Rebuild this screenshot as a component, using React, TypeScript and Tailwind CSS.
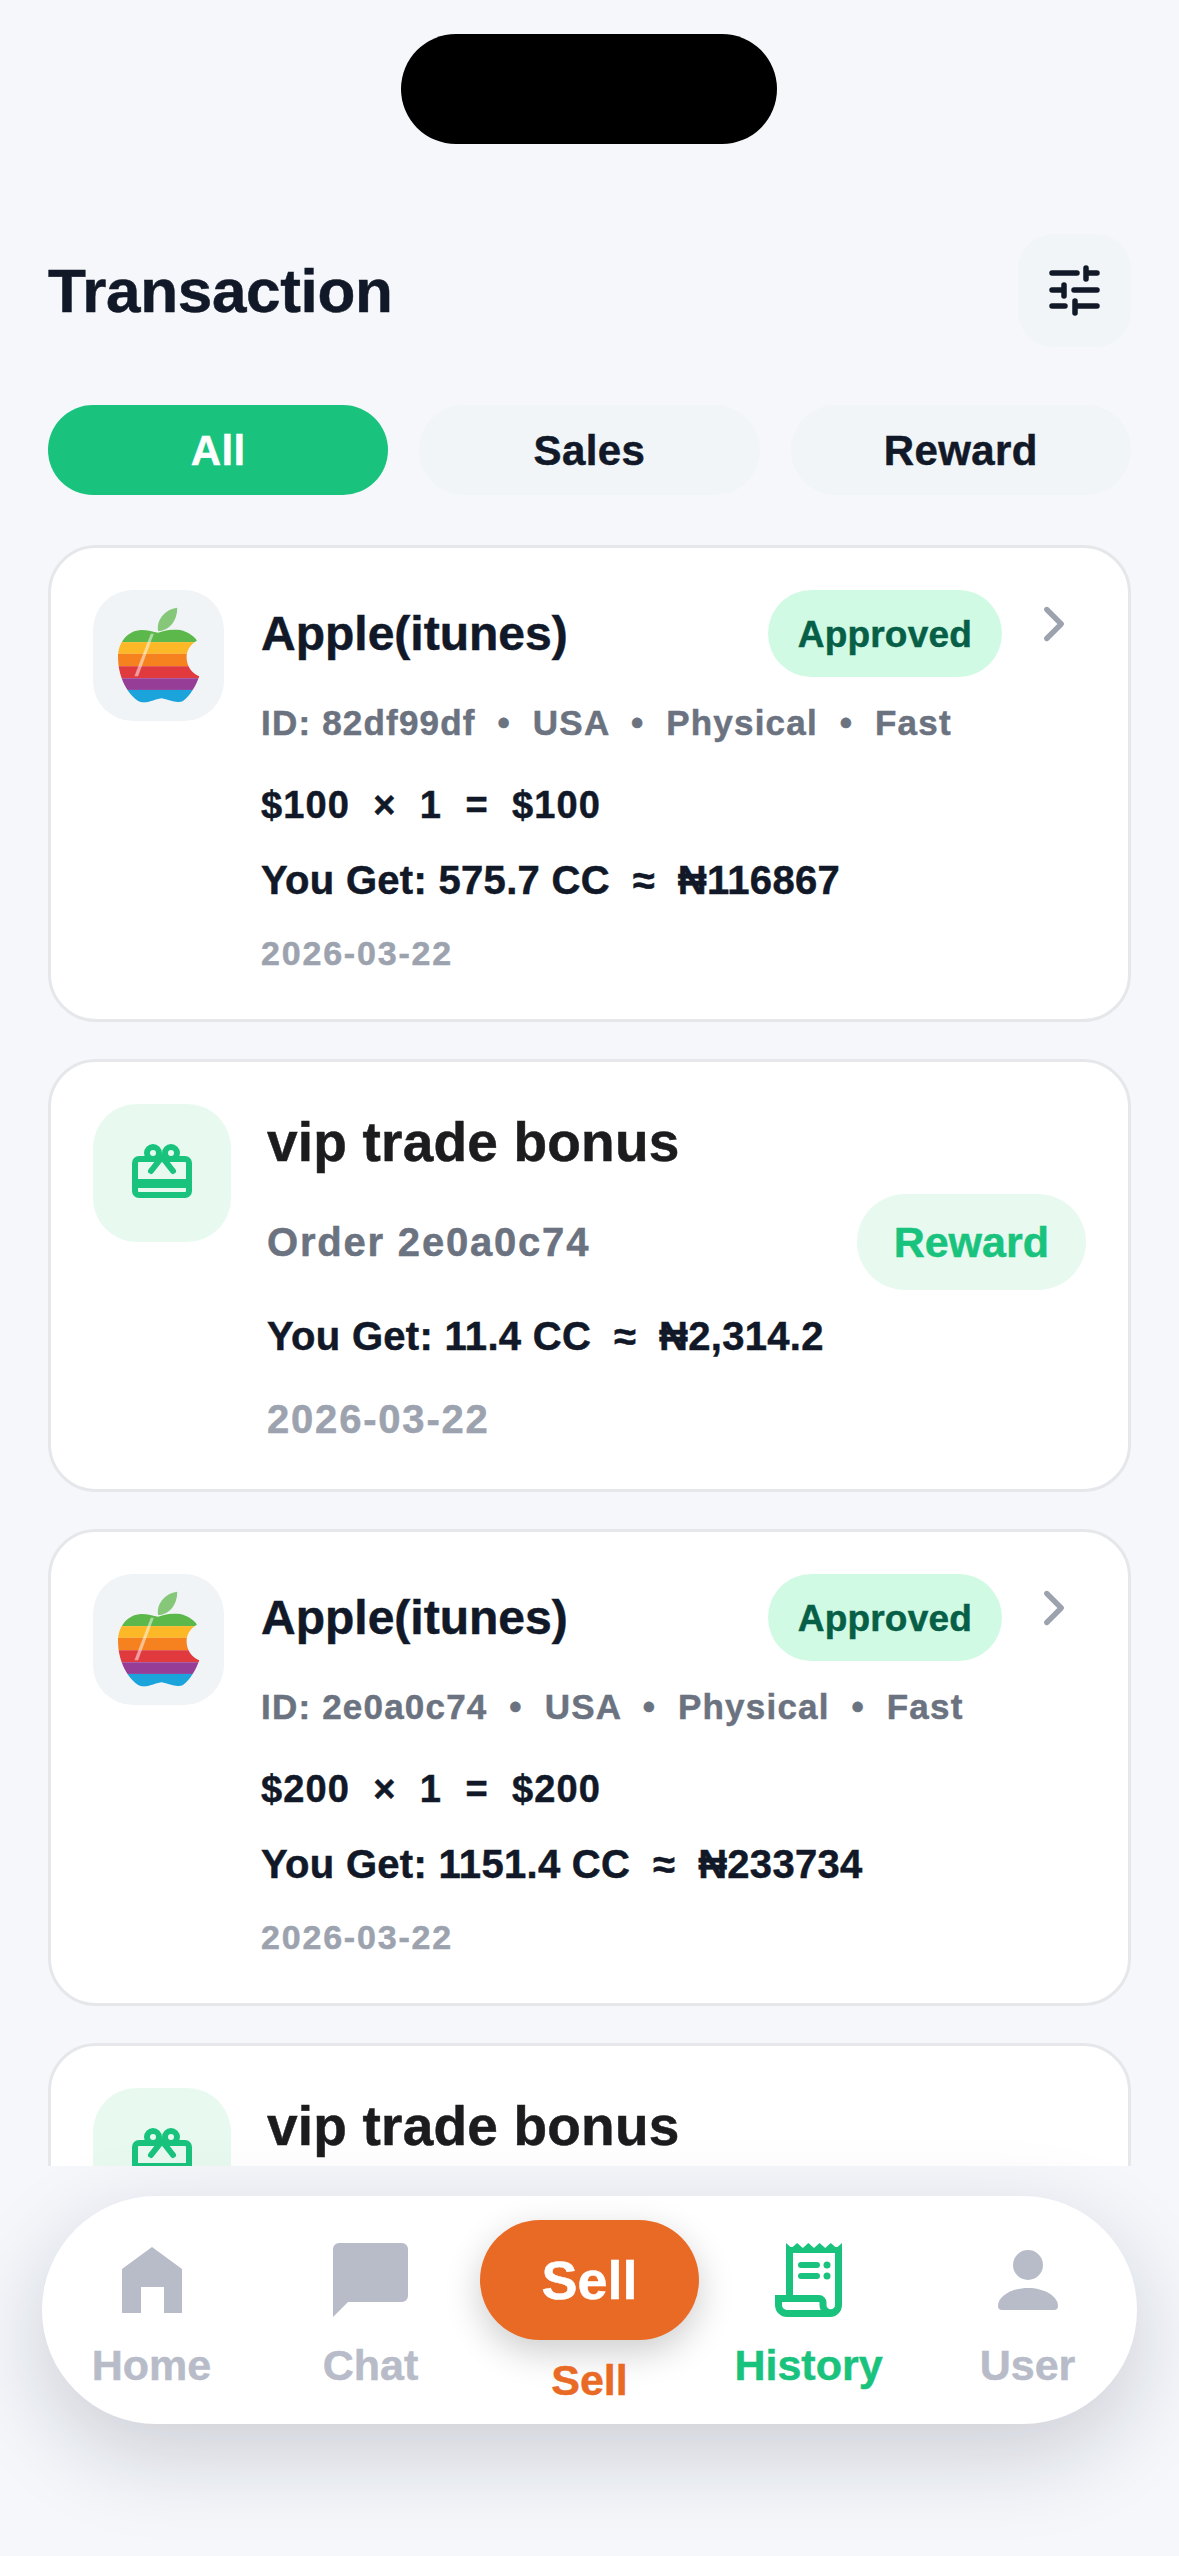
import { ChevronRight } from "lucide-react"

const font = "font-['Liberation_Sans','Arial',sans-serif]"

function TuneIcon() {
  return (
    <svg viewBox="36 34 56 56" className="w-[56px] h-[56px]" fill="none" stroke="#111827" strokeWidth="5.5" strokeLinecap="round">
      <path d="M41 44H66M75 39V50M75 44H86M41 61H53M53 56V67M63 61H86M41 77H54M64 72V84M64 77H86" />
    </svg>
  )
}

function AppleLogo({ uid }: { uid: string }) {
  return (
    <svg viewBox="85 55 245 290" className="w-[82px] h-[97px]">
      <defs>
        <clipPath id={uid}>
          <path d="M205 132C225 125 250 120 270 124C290 128 310 140 321 155C300 168 290 185 290 205C290 232 305 252 328 262C318 290 300 322 280 335C260 346 240 332 215 328C190 332 170 346 150 338C115 320 85 265 85 205C85 160 115 125 155 124C175 124 190 130 205 132Z" />
        </clipPath>
      </defs>
      <path d="M205 127C198 95 225 62 262 57C262 95 240 125 205 127Z" fill="#86c77a" />
      <g clipPath={`url(#${uid})`}>
        <rect x="80" y="115" width="255" height="45" fill="#5cb84a" />
        <rect x="80" y="160" width="255" height="35" fill="#fdb827" />
        <rect x="80" y="195" width="255" height="37" fill="#f5821f" />
        <rect x="80" y="232" width="255" height="36" fill="#e03a3e" />
        <rect x="80" y="268" width="255" height="35" fill="#963d97" />
        <rect x="80" y="303" width="255" height="45" fill="#1ba3dc" />
        <path d="M183 135L192 135L145 262L134 262Z" fill="#fff" opacity="0.5" />
      </g>
    </svg>
  )
}

function GiftIcon() {
  return (
    <svg viewBox="12 13 60 54" className="w-[60px] h-[54px]" fill="none" stroke="#19c37d" strokeWidth="6" strokeLinecap="round" strokeLinejoin="round">
      <rect x="15" y="28" width="54" height="36" rx="4" />
      <path d="M15 52.5H69" strokeWidth="9" strokeLinecap="butt" />
      <path d="M31 40L42 26L53 40" />
      <circle cx="33" cy="22" r="6" />
      <circle cx="51" cy="22" r="6" />
    </svg>
  )
}

function SaleCard({ id, rate, total, cc, naira }: { id: string; rate: string; total: string; cc: string; naira: string }) {
  return (
    <div className="flex shrink-0 h-[477px] pl-[42px] pr-[42px] pt-[42px] bg-white border-[3px] border-[#e5e7eb] rounded-[48px]">
      <div className="flex items-center justify-center w-[131px] h-[131px] shrink-0 rounded-[40px] bg-[#f0f4f7]">
        <AppleLogo uid={`apple-${id}`} />
      </div>
      <div className="flex-1 ml-[37px]">
        <div className="flex items-center justify-between h-[87px]">
          <span className="text-[48px] font-bold text-[#111827]">Apple(itunes)</span>
          <div className="flex items-start">
            <span className="flex items-center h-[87px] px-[30px] pt-[2px] rounded-full bg-[#d1fae5] text-[#065f46] text-[37px] font-bold tracking-[0.2px]">Approved</span>
            <ChevronRight className="w-[58px] h-[58px] ml-[23px] mr-[3px] mt-[5px] text-[#9ca3af]" strokeWidth={2.2} />
          </div>
        </div>
        <p className="mt-[24px] text-[#6b7280] text-[35px] font-bold leading-[44px] tracking-[1.2px] whitespace-pre">{`ID: ${id}  •  USA  •  Physical  •  Fast`}</p>
        <p className="mt-[35px] text-[#111827] text-[38px] font-bold leading-[50px] tracking-[1.1px] whitespace-pre">{`$${rate}  ×  1  =  $${total}`}</p>
        <p className="mt-[25px] text-[#111827] text-[40px] font-bold leading-[50px] tracking-[0.3px] whitespace-pre">{`You Get: ${cc} CC  ≈  ₦${naira}`}</p>
        <p className="mt-[26px] text-[#9ca3af] text-[34px] font-bold leading-[44px] tracking-[1.8px]">2026-03-22</p>
      </div>
    </div>
  )
}

// the last card is cut off by the nav area, only its title shows
function BonusCard({ order, cc, naira }: { order?: string; cc?: string; naira?: string }) {
  return (
    <div className="flex shrink-0 h-[433px] pl-[42px] pr-[42px] pt-[42px] bg-white border-[3px] border-[#e5e7eb] rounded-[48px]">
      <div className="flex items-center justify-center w-[138px] h-[138px] shrink-0 pb-[4px] rounded-[44px] bg-[#e8faf0]">
        <GiftIcon />
      </div>
      <div className="flex-1 ml-[36px]">
        <p className="text-[55px] font-bold tracking-[0.2px] text-[#1c1c1e] leading-[76px]">vip trade bonus</p>
        {order && (
          <>
            <div className="flex items-center justify-between mt-[14px]">
              <span className="text-[#6b7280] text-[40px] font-bold tracking-[1.8px]">Order {order}</span>
              <span className="flex items-center h-[96px] px-[37px] rounded-full bg-[#e8faf0] text-[#19c37d] text-[43px] font-bold">Reward</span>
            </div>
            <p className="mt-[21px] text-[#111827] text-[40px] font-bold leading-[50px] tracking-[0.3px] whitespace-pre">{`You Get: ${cc} CC  ≈  ₦${naira}`}</p>
            <p className="mt-[33px] text-[#9ca3af] text-[40px] font-bold leading-[50px] tracking-[1.8px]">2026-03-22</p>
          </>
        )}
      </div>
    </div>
  )
}

function NavItem({ label, icon, color }: { label: string; icon: React.ReactNode; color: string }) {
  return (
    <div className="flex flex-col items-center w-[219px]">
      <div className="flex items-center justify-center h-[84px]">{icon}</div>
      <span className={`mt-[18px] text-[43px] font-bold leading-[50px] ${color}`}>{label}</span>
    </div>
  )
}

export default function App() {
  return (
    <div className={`relative flex flex-col h-[2556px] overflow-hidden bg-[#f5f7fb] [-webkit-text-stroke:0.5px] ${font}`}>
      {/* dynamic island */}
      <div className="absolute top-[34px] left-[401px] w-[376px] h-[110px] rounded-full bg-black" />

      <div className="flex flex-col gap-[37px] h-[2166px] overflow-hidden px-[48px] pt-[234px]">
        <header className="flex items-center justify-between shrink-0">
          <h1 className="text-[62px] font-bold tracking-[-0.3px] text-[#111827]">Transaction</h1>
          <button className="flex items-center justify-center w-[113px] h-[113px] rounded-[36px] bg-[#f1f5f7]">
            <TuneIcon />
          </button>
        </header>

        <div className="flex gap-[31px] shrink-0 mt-[21px] mb-[13px] text-[42px] font-bold tracking-[0.4px]">
          <button className="flex-1 h-[90px] rounded-full bg-[#19c37d] text-white">All</button>
          <button className="flex-1 h-[90px] rounded-full bg-[#f1f5f7] text-[#111827]">Sales</button>
          <button className="flex-1 h-[90px] rounded-full bg-[#f1f5f7] text-[#111827]">Reward</button>
        </div>

        <SaleCard id="82df99df" rate="100" total="100" cc="575.7" naira="116867" />
        <BonusCard order="2e0a0c74" cc="11.4" naira="2,314.2" />
        <SaleCard id="2e0a0c74" rate="200" total="200" cc="1151.4" naira="233734" />
        <BonusCard />
      </div>

      {/* bottom nav */}
      <nav className="flex items-start justify-center mt-[30px] mx-[42px] h-[228px] pt-[42px] rounded-[114px] bg-white shadow-[0_30px_90px_rgba(15,23,42,0.18)]">
        <NavItem
          label="Home"
          color="text-[#b8bcc9]"
          icon={
            <svg viewBox="0 0 60 66" className="w-[60px] h-[66px]" fill="#b8bcc9">
              <path d="M30 0 60 22v44H42V40H19v26H0V22z" />
            </svg>
          }
        />
        <NavItem
          label="Chat"
          color="text-[#b8bcc9]"
          icon={
            <svg viewBox="0 0 75 74" className="w-[75px] h-[74px]" fill="#b8bcc9">
              <path d="M6 0h63a6 6 0 0 1 6 6v47a6 6 0 0 1-6 6H15L0 74V6a6 6 0 0 1 6-6z" />
            </svg>
          }
        />
        <div className="flex flex-col items-center w-[219px] -mt-[18px]">
          <button className="w-[219px] h-[120px] rounded-[60px] bg-[#e96a24] text-white text-[54px] font-bold shadow-[0_12px_36px_rgba(0,0,0,0.2)]">Sell</button>
          <span className="mt-[15px] text-[#e96a24] text-[43px] font-bold leading-[50px]">Sell</span>
        </div>
        <NavItem
          label="History"
          color="text-[#19c37d]"
          icon={
            <svg viewBox="0 0 67 74" className="w-[67px] h-[74px]" fill="none" stroke="#19c37d" strokeWidth="7">
              <path d="M11 0l5.6 5 5.6-5 5.6 5 5.6-5 5.6 5 5.6-5 5.6 5 5.6-5 5.6 5 5.6-5V10H11z" fill="#19c37d" stroke="none" />
              <path d="M14.5 56V4" />
              <path d="M63.5 4V62a8.5 8.5 0 0 1-8.5 8.5H12a8.5 8.5 0 0 1-8.5-8.5V55.5H44a4 4 0 0 1 4 4V62a7.75 7.75 0 0 0 15.5 0" />
              <path d="M26 22H42M26 33H42" strokeWidth="6" strokeLinecap="round" />
              <circle cx="52" cy="22" r="3.5" fill="#19c37d" stroke="none" />
              <circle cx="52" cy="33" r="3.5" fill="#19c37d" stroke="none" />
            </svg>
          }
        />
        <NavItem
          label="User"
          color="text-[#b8bcc9]"
          icon={
            <svg viewBox="0 0 60 60" className="w-[60px] h-[60px]" fill="#b8bcc9">
              <ellipse cx="30" cy="15" rx="15" ry="15" />
              <path d="M0 56c0-10 14-18 30-18s30 8 30 18a4 4 0 0 1-4 4H4a4 4 0 0 1-4-4z" />
            </svg>
          }
        />
      </nav>
    </div>
  )
}
